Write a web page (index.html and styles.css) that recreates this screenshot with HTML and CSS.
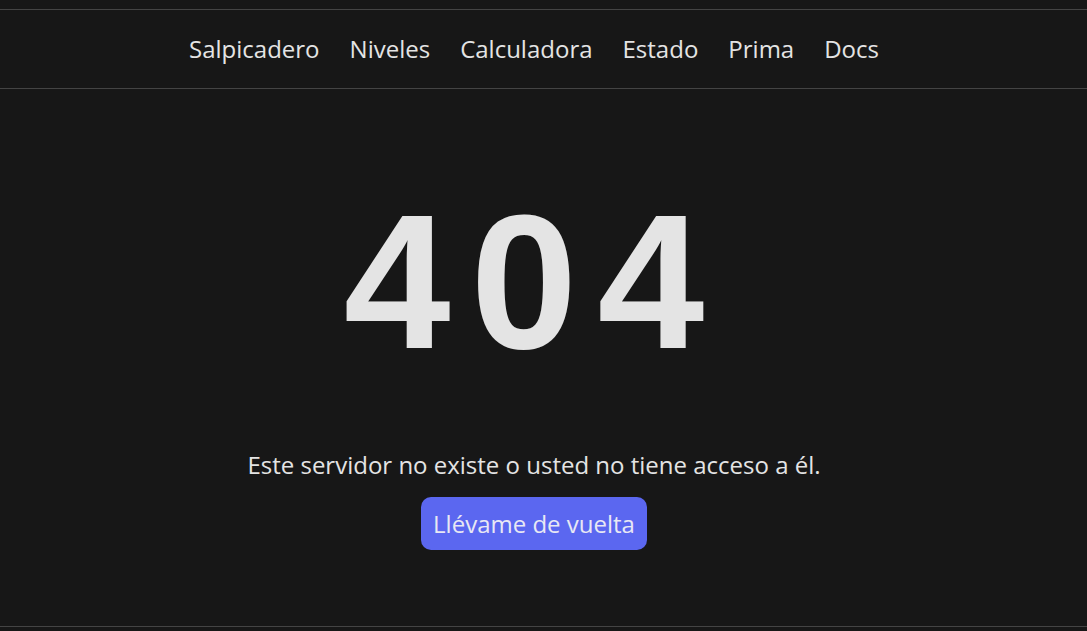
FILE: index.html
```html
<!DOCTYPE html>
<html lang="es">
<head>
<meta charset="utf-8">
<title>404</title>
<link rel="stylesheet" href="styles.css">
</head>
<body>
<div class="page">
  <header class="topbar">
    <nav class="nav">
      <a href="#">Salpicadero</a>
      <a href="#">Niveles</a>
      <a href="#">Calculadora</a>
      <a href="#">Estado</a>
      <a href="#">Prima</a>
      <a href="#">Docs</a>
    </nav>
  </header>
  <main class="main">
    <h1 class="code">404</h1>
    <p class="msg">Este servidor no existe o usted no tiene acceso a él.</p>
    <a class="btn" href="#">Llévame de vuelta</a>
  </main>
</div>
</body>
</html>
```

FILE: styles.css
```css
html, body {
  margin: 0;
  padding: 0;
  background: #171717;
  height: 100%;
}
body {
  font-family: "Open Sans", "Noto Sans", sans-serif;
  color: #e4e4e4;
}
.page {
  padding-top: 9px;
  height: 631px;
  box-sizing: border-box;
  display: flex;
  flex-direction: column;
}
.topbar {
  border-top: 1px solid #444;
  border-bottom: 1px solid #444;
  height: 76px;
  padding-right: 19px;
  padding-bottom: 2px;
  display: flex;
  align-items: center;
  justify-content: center;
}
.nav {
  display: flex;
  gap: 30px;
}
.nav a {
  color: #e4e4e4;
  text-decoration: none;
  font-size: 24px;
}
.main {
  flex: 1;
  border-bottom: 1px solid #444;
  padding-right: 19px;
  display: flex;
  flex-direction: column;
  align-items: center;
  margin-bottom: 4px;
}
.code {
  margin: 97px 0 0;
  font-family: "Liberation Sans", Arial, sans-serif;
  font-weight: bold;
  font-size: 192px;
  line-height: 192px;
  letter-spacing: 20px;
  color: #e4e4e4;
}
.msg {
  margin: 72px 0 0;
  font-size: 24px;
  line-height: 30px;
}
.btn {
  margin-top: 17px;
  background: #5b67f0;
  color: #e8e8f4;
  text-decoration: none;
  font-size: 24px;
  line-height: 53px;
  padding: 0 12px;
  border-radius: 10px;
}
```
